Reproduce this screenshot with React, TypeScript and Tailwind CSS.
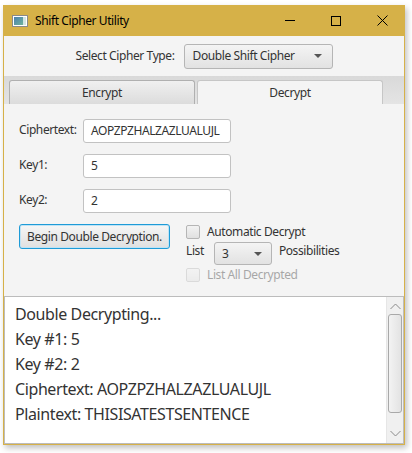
import React from "react";

const font = { fontFamily: '"Noto Sans", "Open Sans", sans-serif' };

const Caret = () => (
  <svg width="8" height="4" viewBox="0 0 8 4">
    <path d="M0 0 L8 0 L4 4 Z" fill="#555" />
  </svg>
);

const Field = ({ value }: { value: string }) => (
  <div className="w-[148px] h-[24px] bg-white border border-[#c2c2c2] rounded-[3px] flex items-center px-[7px] text-[12px] text-[#333]">
    {value}
  </div>
);

const App = () => {
  return (
    <div className="w-[412px] h-[453px] bg-white pl-[3px] pt-[5px] tracking-[-0.4px]" style={font}>
      <div className="w-[402px] h-[440px] border border-[#d6b148] flex flex-col shadow-[2px_3px_6px_rgba(0,0,0,0.25)]">
        {/* title bar */}
        <div className="h-[31px] bg-[#d6b148] flex items-center -mx-px -mt-px">
          <svg width="16" height="12" viewBox="0 0 16 12" className="ml-[9px] mr-[7px]">
            <defs>
              <linearGradient id="ic" x1="0" y1="0" x2="1" y2="1">
                <stop offset="0" stopColor="#4a7fb0" />
                <stop offset="1" stopColor="#6fb39a" />
              </linearGradient>
            </defs>
            <rect x="0.5" y="0.5" width="15" height="11" fill="#fff" stroke="#8a8a8a" />
            <rect x="2" y="2" width="9" height="8" fill="url(#ic)" />
            <rect x="11" y="2" width="3" height="8" fill="#d5e6e2" />
          </svg>
          <span className="text-[12px] text-black">Shift Cipher Utility</span>
          <div className="ml-auto flex items-center h-full">
            <div className="w-[46px] h-full flex items-center justify-center">
              <div className="w-[10px] h-px bg-black" />
            </div>
            <div className="w-[46px] h-full flex items-center justify-center">
              <div className="w-[10px] h-[10px] border border-black" />
            </div>
            <div className="w-[46px] h-full flex items-center justify-center">
              <svg width="11" height="11" viewBox="0 0 11 11">
                <path d="M0.5 0.5 L10.5 10.5 M10.5 0.5 L0.5 10.5" stroke="#000" strokeWidth="1" />
              </svg>
            </div>
          </div>
        </div>

        <div className="flex-1 bg-[#f4f4f4] flex flex-col">
          {/* cipher type */}
          <div className="h-[40px] flex items-center justify-center gap-[9px]">
            <span className="text-[12px] text-[#333]">Select Cipher Type:</span>
            <div className="w-[149px] h-[25px] rounded-[3px] border border-[#b5b5b5] bg-gradient-to-b from-[#f4f4f4] to-[#e2e2e2] flex items-center justify-between pl-[8px] pr-[10px] text-[12px] text-[#333]">
              <span>Double Shift Cipher</span>
              <Caret />
            </div>
          </div>

          {/* tabs */}
          <div className="h-[28px] bg-gradient-to-b from-[#d9d9d9] to-[#e4e4e4] flex items-end pl-[5px] gap-[2px]">
            <div className="w-[186px] h-[24px] rounded-t-[3px] border border-b-0 border-[#b0b0b0] bg-gradient-to-b from-[#f0f0f0] to-[#dcdcdc] flex items-center justify-center text-[12px] text-[#333]">
              Encrypt
            </div>
            <div className="w-[186px] h-[24px] rounded-t-[3px] border border-b-0 border-[#c6c6c6] bg-[#f4f4f4] flex items-center justify-center text-[12px] text-[#333]">
              Decrypt
            </div>
          </div>

          {/* form */}
          <div className="pl-[15px] pt-[15px] flex flex-col text-[12px] text-[#333]">
            <div className="flex items-start gap-[7px] h-[35px]">
              <span className="w-[57px] pt-[2px]">Ciphertext:</span>
              <Field value="AOPZPZHALZAZLUALUJL" />
            </div>
            <div className="flex items-start gap-[7px] h-[35px]">
              <span className="w-[57px] pt-[2px]">Key1:</span>
              <Field value="5" />
            </div>
            <div className="flex items-start gap-[7px] h-[35px]">
              <span className="w-[57px] pt-[2px]">Key2:</span>
              <Field value="2" />
            </div>
            <div className="flex items-start">
              <div className="w-[151px] h-[25px] rounded-[3px] border border-[#1e9bd7] shadow-[inset_0_0_0_1px_#bfe3f5] bg-gradient-to-b from-[#f6f6f6] to-[#e0e0e0] flex items-center justify-center text-[12px] text-[#333]">
                Begin Double Decryption.
              </div>
              <div className="ml-[16px] flex flex-col">
                <div className="flex items-center gap-[7px] h-[16px]">
                  <div className="w-[14px] h-[14px] rounded-[2px] border border-[#b5b5b5] bg-gradient-to-b from-[#f2f2f2] to-[#e0e0e0]" />
                  <span>Automatic Decrypt</span>
                </div>
                <div className="flex items-start h-[26px] mt-[1px]">
                  <span className="mt-[1px]">List</span>
                  <div className="ml-[10px] mt-[1px] w-[58px] h-[23px] rounded-[3px] border border-[#b5b5b5] bg-gradient-to-b from-[#f4f4f4] to-[#e2e2e2] flex items-center justify-between pl-[7px] pr-[9px]">
                    <span>3</span>
                    <Caret />
                  </div>
                  <span className="ml-[7px] mt-[1px]">Possibilities</span>
                </div>
                <div className="flex items-center gap-[7px] h-[16px] opacity-40">
                  <div className="w-[14px] h-[14px] rounded-[2px] border border-[#b5b5b5] bg-gradient-to-b from-[#f2f2f2] to-[#e0e0e0]" />
                  <span>List All Decrypted</span>
                </div>
              </div>
            </div>
          </div>

          {/* output */}
          <div className="mt-auto h-[148px] bg-white border border-[#bcbcbc] flex">
            <div className="flex-1 pl-[10px] pt-[5px] text-[16px] text-[#333] leading-[25px]">
              <div>Double Decrypting...</div>
              <div>Key #1: 5</div>
              <div>Key #2: 2</div>
              <div>Ciphertext: AOPZPZHALZAZLUALUJL</div>
              <div>Plaintext: THISISATESTSENTENCE</div>
            </div>
            <div className="w-[17px] bg-[#f0f0f0] border-l border-[#e6e6e6] flex flex-col items-center">
              <svg width="11" height="7" viewBox="0 0 11 7" className="mt-[6px]">
                <path d="M0.5 6 L5.5 1 L10.5 6" stroke="#8a8a8a" fill="none" />
              </svg>
              <div className="mt-[4px] w-[14px] h-[99px] rounded-[3px] border border-[#a9a9a9] bg-gradient-to-r from-[#f3f3f3] to-[#e3e3e3]" />
              <svg width="11" height="7" viewBox="0 0 11 7" className="mt-auto mb-[6px]">
                <path d="M0.5 1 L5.5 6 L10.5 1" stroke="#8a8a8a" fill="none" />
              </svg>
            </div>
          </div>
        </div>
      </div>
    </div>
  );
};

export default App;
